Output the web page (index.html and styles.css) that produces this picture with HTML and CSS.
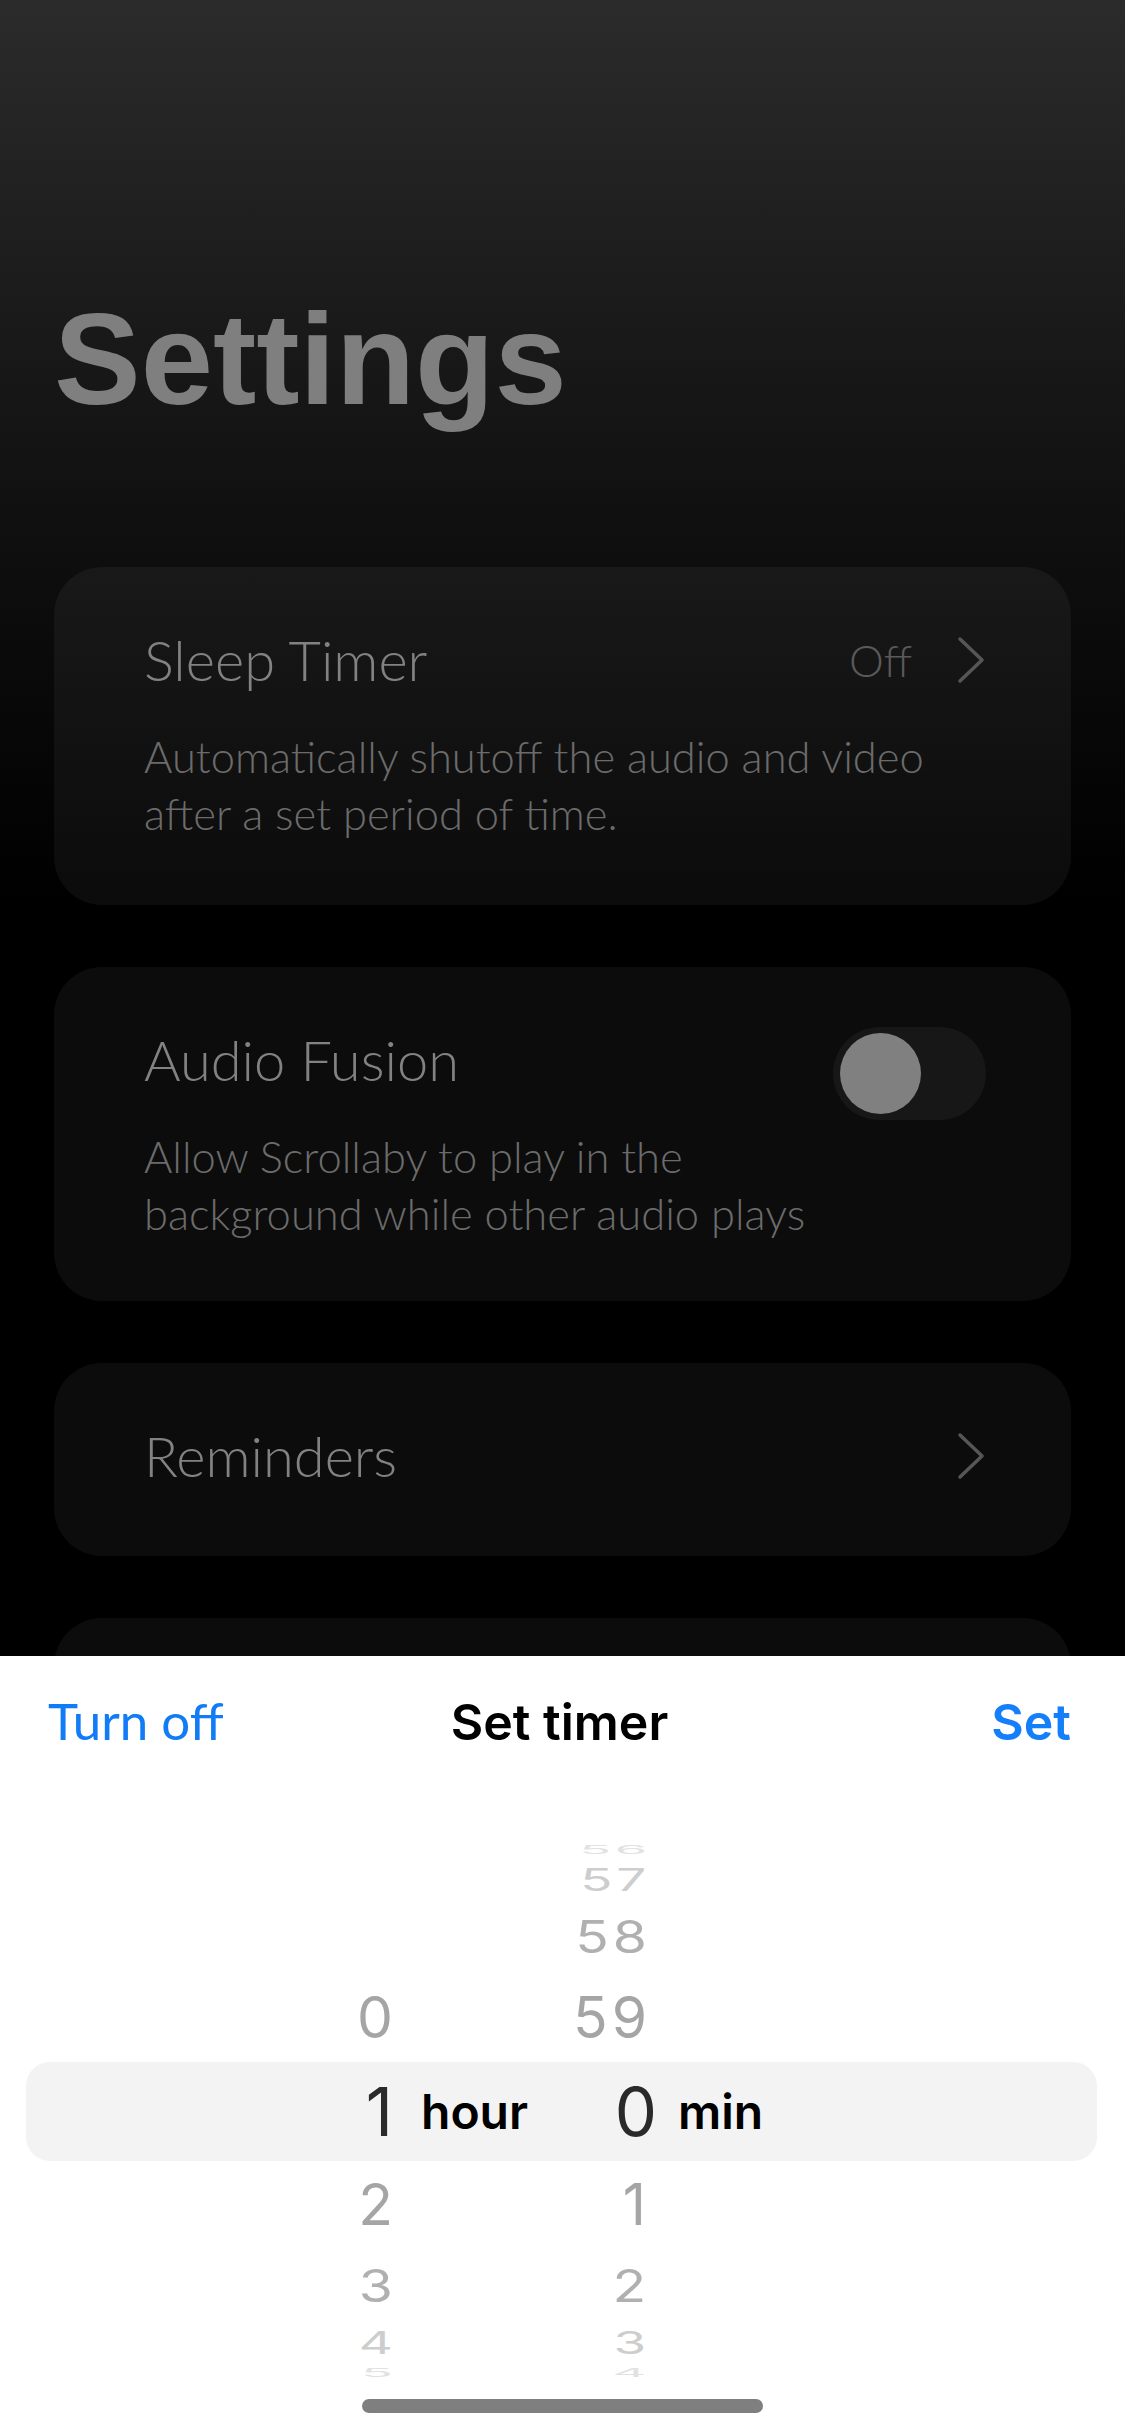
FILE: index.html
```html
<!DOCTYPE html>
<html lang="en">
<head>
  <meta name="viewport" content="width=device-width, initial-scale=1.0">
  <title>Settings</title>
  <link rel="stylesheet" href="styles.css">
</head>
<body>
  <div class="screen">
    <main class="settings">
      <h1 class="page-title">Settings</h1>

      <!-- Sleep timer -->
      <section class="card">
        <div class="card-head">
          <span class="card-title">Sleep Timer</span>
          <span class="card-value">Off</span>
          <svg class="chevron" viewBox="0 0 30 48"><path d="M4 3 L26 24 L4 45"/></svg>
        </div>
        <p class="card-desc">Automatically shutoff the audio and video<br>after a set period of time.</p>
      </section>

      <!-- Audio fusion -->
      <section class="card card-toggle">
        <div class="card-head">
          <span class="card-title">Audio Fusion</span>
          <div class="toggle"><div class="toggle-knob"></div></div>
        </div>
        <p class="card-desc">Allow Scrollaby to play in the<br>background while other audio plays</p>
      </section>

      <!-- Reminders -->
      <section class="card card-single">
        <div class="card-head">
          <span class="card-title">Reminders</span>
          <svg class="chevron" viewBox="0 0 30 48"><path d="M4 3 L26 24 L4 45"/></svg>
        </div>
      </section>

      <section class="card card-single"></section>
    </main>

    <!-- Set timer sheet -->
    <div class="sheet">
      <div class="sheet-head">
        <span class="sheet-btn-left">Turn off</span>
        <span class="sheet-title">Set timer</span>
        <span class="sheet-btn-right">Set</span>
      </div>

      <div class="picker">
        <div class="row far3"><span class="num"></span><span class="label"></span><span class="num min-num">56</span><span class="label"></span></div>
        <div class="row far2"><span class="num"></span><span class="label"></span><span class="num min-num">57</span><span class="label"></span></div>
        <div class="row far1"><span class="num"></span><span class="label"></span><span class="num min-num">58</span><span class="label"></span></div>
        <div class="row near"><span class="num">0</span><span class="label"></span><span class="num min-num">59</span><span class="label"></span></div>
        <div class="row selected"><span class="num">1</span><span class="label">hour</span><span class="num min-num">0</span><span class="label">min</span></div>
        <div class="row near"><span class="num">2</span><span class="label"></span><span class="num min-num">1</span><span class="label"></span></div>
        <div class="row far1"><span class="num">3</span><span class="label"></span><span class="num min-num">2</span><span class="label"></span></div>
        <div class="row far2"><span class="num">4</span><span class="label"></span><span class="num min-num">3</span><span class="label"></span></div>
        <div class="row far3"><span class="num">5</span><span class="label"></span><span class="num min-num">4</span><span class="label"></span></div>
      </div>

      <div class="home-bar"></div>
    </div>
  </div>
</body>
</html>
```

FILE: styles.css
```css
body {
  margin: 0;
  padding: 0;
  background: #000;
  font-family: Lato, "Open Sans", sans-serif;
}
.screen {
  position: relative;
  width: 1125px;
  height: 2436px;
  overflow: hidden;
  background: linear-gradient(180deg, #2b2b2b 0px, #1b1b1b 300px, #0e0e0e 560px, #000 900px);
}
.settings {
  padding: 0 54px;
  display: flex;
  flex-direction: column;
  gap: 62px;
}
.page-title {
  margin: 294px 0 81px;
  font-family: "Liberation Sans", Arial, sans-serif;
  font-weight: 700;
  font-size: 130px;
  line-height: 130px;
  color: #7f7f7f;
}
.card {
  background-color: rgba(255, 255, 255, 0.046);
  border-radius: 48px;
  padding: 61px 85px 63px 90px;
}
.card-toggle {
  padding-bottom: 59px;
}
.card-single {
  padding-bottom: 68px;
  min-height: 64px;
}
.card-head {
  display: flex;
  align-items: center;
  height: 64px;
}
.card-title {
  flex: 1;
  font-weight: 300;
  font-size: 56px;
  line-height: 64px;
  color: #828282;
}
.card-value {
  font-weight: 300;
  font-size: 44px;
  color: #5a5a5a;
  margin-right: 44px;
}
.chevron {
  width: 30px;
  height: 48px;
}
.chevron path {
  fill: none;
  stroke: #565656;
  stroke-width: 3.5;
  stroke-linecap: round;
  stroke-linejoin: round;
}
.card-desc {
  margin: 36px 0 0;
  font-weight: 300;
  font-size: 43.5px;
  line-height: 57px;
  color: #6b6b6b;
}
.toggle {
  width: 153px;
  height: 93px;
  margin: -2px 0 -29px;
  border-radius: 47px;
  background-color: #171717;
  display: flex;
  align-items: center;
  padding: 0 7px;
  box-sizing: border-box;
}
.toggle-knob {
  width: 81px;
  height: 81px;
  border-radius: 50%;
  background-color: #808080;
}

/* bottom sheet */
.sheet {
  position: absolute;
  top: 1656px;
  left: 0;
  right: 0;
  bottom: 0;
  background: #fff;
}
.sheet-head {
  display: grid;
  grid-template-columns: 1fr auto 1fr;
  align-items: baseline;
  padding: 34px 54px 0 48px;
  height: 60px;
}
.sheet-btn-left {
  justify-self: start;
  font-family: Lato, sans-serif;
  font-size: 51px;
  color: #117cf6;
}
.sheet-title {
  font-family: Inter, "Liberation Sans", sans-serif;
  font-weight: 600;
  font-size: 50px;
  line-height: 60px;
  color: #000;
}
.sheet-btn-right {
  justify-self: end;
  font-family: Inter, "Liberation Sans", sans-serif;
  font-weight: 600;
  font-size: 50px;
  color: #147efb;
}
.picker {
  margin: 90px 28px 0 26px;
  font-family: Inter, "Liberation Sans", sans-serif;
}
.row {
  display: grid;
  grid-template-columns: 367px 180px 77px 1fr;
  align-items: center;
}
.num {
  text-align: right;
  font-size: 57px;
  color: #a5a5a5;
  transform-origin: right center;
}
.min-num {
  letter-spacing: 4px;
}
.label {
  padding-left: 28px;
}
.near { height: 88px; line-height: 88px; }
.far1 { height: 74px; line-height: 74px; }
.far2 { height: 40px; line-height: 40px; }
.far3 { height: 20px; line-height: 20px; }
.far1 .num { transform: scale(0.97, 0.78); color: #b0b0b0; }
.far2 .num { transform: scale(0.93, 0.54); color: #cdcdcd; }
.far3 .num { transform: scale(0.92, 0.2); color: #e2e2e2; }
.selected {
  height: 99px;
  line-height: 99px;
  background-color: #f3f3f3;
  border-radius: 24px;
}
.selected .num {
  font-size: 67px;
  color: #2a2a2a;
}
.selected .min-num {
  letter-spacing: 0;
  margin-right: -7px;
}
.selected .label {
  font-weight: 600;
  font-size: 48px;
  color: #000;
}
.home-bar {
  width: 401px;
  height: 14px;
  margin: 16px auto 0;
  border-radius: 7px;
  background-color: #7f7f7f;
}
```
